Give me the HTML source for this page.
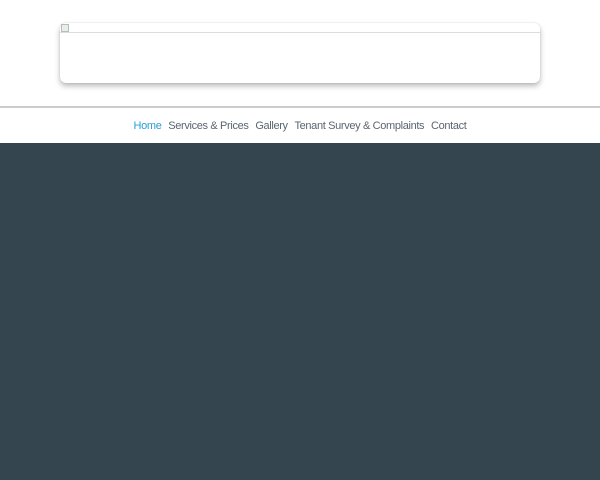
<!DOCTYPE html>
<html><head><style>
html,body{margin:0;padding:0;width:600px;height:480px;overflow:hidden;background:#fff;font-family:"Liberation Sans",sans-serif}
.card{position:absolute;left:60px;top:23px;width:480px;height:60px;background:#fff;border-radius:6px;box-shadow:0 3px 6px rgba(0,0,0,.28),0 0 1px rgba(0,0,0,.2)}
.card .ln{position:absolute;left:0;right:0;top:9px;height:1px;background:#ddd}
.card .ic{position:absolute;left:1px;top:1px;width:6px;height:6px;border:1px solid #bbb;background:#e6efe6}
.div{position:absolute;left:0;right:0;top:106px;height:2px;background:#ccc}
.nav{position:absolute;left:0;right:0;top:120px;text-align:center;font-size:11px;color:#5a6670;letter-spacing:-0.35px;white-space:nowrap}
.nav span{margin:0 3.4px}
.nav .a{color:#2a9fd6}
.dark{position:absolute;left:0;right:0;top:143px;bottom:0;background:#34454f}
</style></head><body>
<div class="card"><div class="ln"></div><div class="ic"></div></div>
<div class="div"></div>
<div class="nav"><span class="a">Home</span><span>Services &amp; Prices</span><span>Gallery</span><span>Tenant Survey &amp; Complaints</span><span>Contact</span></div>
<div class="dark"></div>
</body></html>
